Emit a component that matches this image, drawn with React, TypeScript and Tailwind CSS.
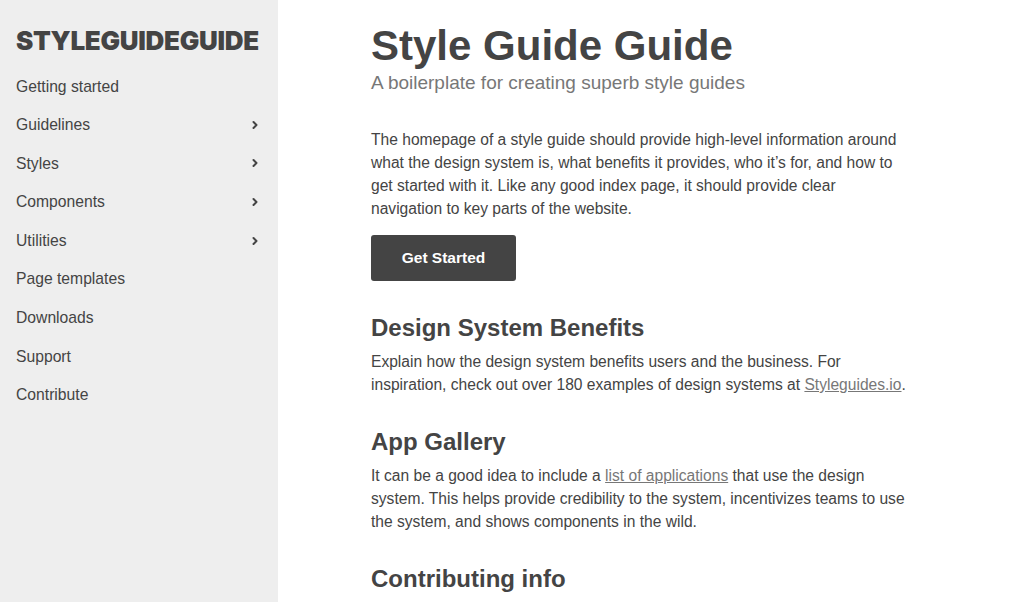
import { ChevronRight } from "lucide-react";

const navItems = [
  { label: "Getting started", sub: false },
  { label: "Guidelines", sub: true },
  { label: "Styles", sub: true },
  { label: "Components", sub: true },
  { label: "Utilities", sub: true },
  { label: "Page templates", sub: false },
  { label: "Downloads", sub: false },
  { label: "Support", sub: false },
  { label: "Contribute", sub: false },
];

export default function App() {
  return (
    <div className="flex h-[602px] w-full overflow-hidden bg-white font-['Liberation_Sans',Arial,sans-serif] text-[#444]">
      {/* sidebar */}
      <aside className="w-[278px] shrink-0 bg-[#eeeeee] pl-4 pr-[16px] pt-[27px]">
        <div className="font-['Inter',sans-serif] text-[26px] leading-[28px] font-black tracking-[-0.3px] text-[#444]">
          STYLEGUIDEGUIDE
        </div>
        <nav className="mt-[12px]">
          {navItems.map((item) => (
            <a
              key={item.label}
              href="#"
              className="flex h-[38.6px] items-center justify-between text-[15.7px] text-[#444]"
            >
              <span>{item.label}</span>
              {item.sub && <ChevronRight className="mr-[1px] h-3 w-3" strokeWidth={4} />}
            </a>
          ))}
        </nav>
      </aside>

      {/* main */}
      <main className="flex-1 pl-[93px] pt-[20px]">
        <h1 className="text-[42px] leading-[52px] font-bold text-[#444]">Style Guide Guide</h1>
        <p className="text-[19px] leading-[22px] text-[#777]">A boilerplate for creating superb style guides</p>

        <p className="mt-[34px] w-[537px] text-[15.6px] leading-[23px]">
          The homepage of a style guide should provide high-level information around what the design
          system is, what benefits it provides, who it’s for, and how to get started with it. Like any
          good index page, it should provide clear navigation to key parts of the website.
        </p>

        <button className="mt-[15px] h-[46px] w-[145px] rounded-[3px] bg-[#444] text-[15.5px] font-bold text-white">
          Get Started
        </button>

        <h2 className="mt-[32px] text-[24px] leading-[30px] font-bold">Design System Benefits</h2>
        <p className="mt-[7px] w-[537px] text-[15.6px] leading-[23px]">
          Explain how the design system benefits users and the business. For inspiration, check out
          over 180 examples of design systems at{" "}
          <a href="#" className="text-[#777] underline">Styleguides.io</a>.
        </p>

        <h2 className="mt-[31px] text-[24px] leading-[30px] font-bold">App Gallery</h2>
        <p className="mt-[7px] w-[537px] text-[15.6px] leading-[23px]">
          It can be a good idea to include a{" "}
          <a href="#" className="text-[#777] underline">list of applications</a> that use the design
          system. This helps provide credibility to the system, incentivizes teams to use the system,
          and shows components in the wild.
        </p>

        <h2 className="mt-[31px] text-[24px] leading-[30px] font-bold">Contributing info</h2>
      </main>
    </div>
  );
}
